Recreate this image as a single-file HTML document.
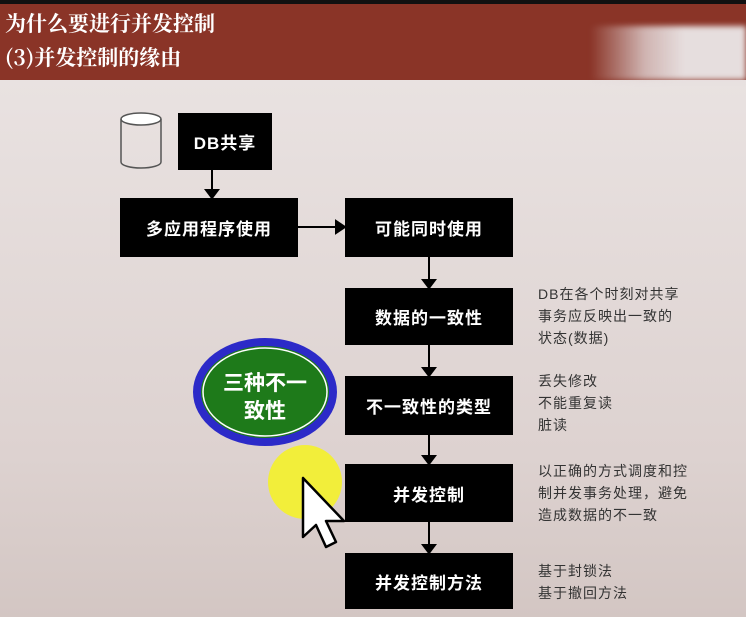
<html><head><style>
body{margin:0;width:746px;height:617px;overflow:hidden;position:relative;background:#e4dbda;font-family:"Liberation Sans","Noto Sans CJK SC",sans-serif}
.hd{position:absolute;left:0;top:0;width:746px;height:80px;background:#8a3427;border-top:4px solid #111;box-sizing:border-box}
.hd div{position:absolute;left:5px;color:#fff;font-weight:bold;font-size:21px;font-family:"Noto Serif CJK SC","Liberation Serif",serif}
.b{position:absolute;background:#000;color:#fff;font-size:17px;font-weight:bold;display:flex;align-items:center;justify-content:center;letter-spacing:1px}
.t{position:absolute;font-size:14px;color:#333;line-height:22px;letter-spacing:1px}
</style></head><body>
<div style="position:absolute;left:0;top:80px;width:746px;height:537px;background:linear-gradient(#e9e2e1,#ddd2d0 70%,#d3c6c3)"></div>
<div class="hd"><div style="top:4px">为什么要进行并发控制</div><div style="top:38px">(3)并发控制的缘由</div></div>
<div style="position:absolute;left:590px;top:26px;width:156px;height:54px;background:linear-gradient(90deg,rgba(220,205,205,0),rgba(225,212,212,.8) 35%,#e6dede 60%);filter:blur(3px)"></div>
<svg style="position:absolute;left:0;top:0" width="746" height="617">
<g fill="none" stroke="#555" stroke-width="1.5"><ellipse cx="141" cy="119" rx="20" ry="6" fill="#fff"/><path d="M121 119V162A20 6 0 0 0 161 162V119"/></g>
<g stroke="#000" stroke-width="2" fill="#000">
<line x1="212" y1="170" x2="212" y2="192"/><path d="M206 190L212 198L218 190Z"/>
<line x1="298" y1="227" x2="338" y2="227"/><path d="M336 221L345 227L336 233Z"/>
<line x1="429" y1="257" x2="429" y2="282"/><path d="M423 280L429 288L435 280Z"/>
<line x1="429" y1="345" x2="429" y2="370"/><path d="M423 368L429 376L435 368Z"/>
<line x1="429" y1="435" x2="429" y2="458"/><path d="M423 456L429 464L435 456Z"/>
<line x1="429" y1="522" x2="429" y2="547"/><path d="M423 545L429 553L435 545Z"/>
</g>
<ellipse cx="265" cy="392" rx="68" ry="50" fill="#1e7a1a" stroke="#2c2ac8" stroke-width="8"/>
<ellipse cx="265" cy="392" rx="62" ry="44" fill="none" stroke="#fff" stroke-width="1.5"/>
<text x="265" y="390" fill="#fff" font-size="21" font-weight="bold" text-anchor="middle" font-family="Noto Sans CJK SC,sans-serif">三种不一</text>
<text x="265" y="418" fill="#fff" font-size="21" font-weight="bold" text-anchor="middle" font-family="Noto Sans CJK SC,sans-serif">致性</text>
<circle cx="305" cy="482" r="37" fill="#f2ee3a"/>
<path d="M303 478L303 537L316 525L326 547L336 542L326 521L344 521Z" fill="#fff" stroke="#000" stroke-width="2.5" stroke-linejoin="round"/>
</svg>
<div class="b" style="left:178px;top:113px;width:94px;height:57px">DB共享</div>
<div class="b" style="left:120px;top:198px;width:178px;height:59px">多应用程序使用</div>
<div class="b" style="left:345px;top:198px;width:168px;height:59px">可能同时使用</div>
<div class="b" style="left:345px;top:288px;width:168px;height:57px">数据的一致性</div>
<div class="b" style="left:345px;top:376px;width:168px;height:59px">不一致性的类型</div>
<div class="b" style="left:345px;top:464px;width:168px;height:58px">并发控制</div>
<div class="b" style="left:345px;top:553px;width:168px;height:56px">并发控制方法</div>
<div class="t" style="left:538px;top:283px">DB在各个时刻对共享<br>事务应反映出一致的<br>状态(数据)</div>
<div class="t" style="left:538px;top:370px">丢失修改<br>不能重复读<br>脏读</div>
<div class="t" style="left:538px;top:460px">以正确的方式调度和控<br>制并发事务处理，避免<br>造成数据的不一致</div>
<div class="t" style="left:538px;top:560px">基于封锁法<br>基于撤回方法</div>
</body></html>
